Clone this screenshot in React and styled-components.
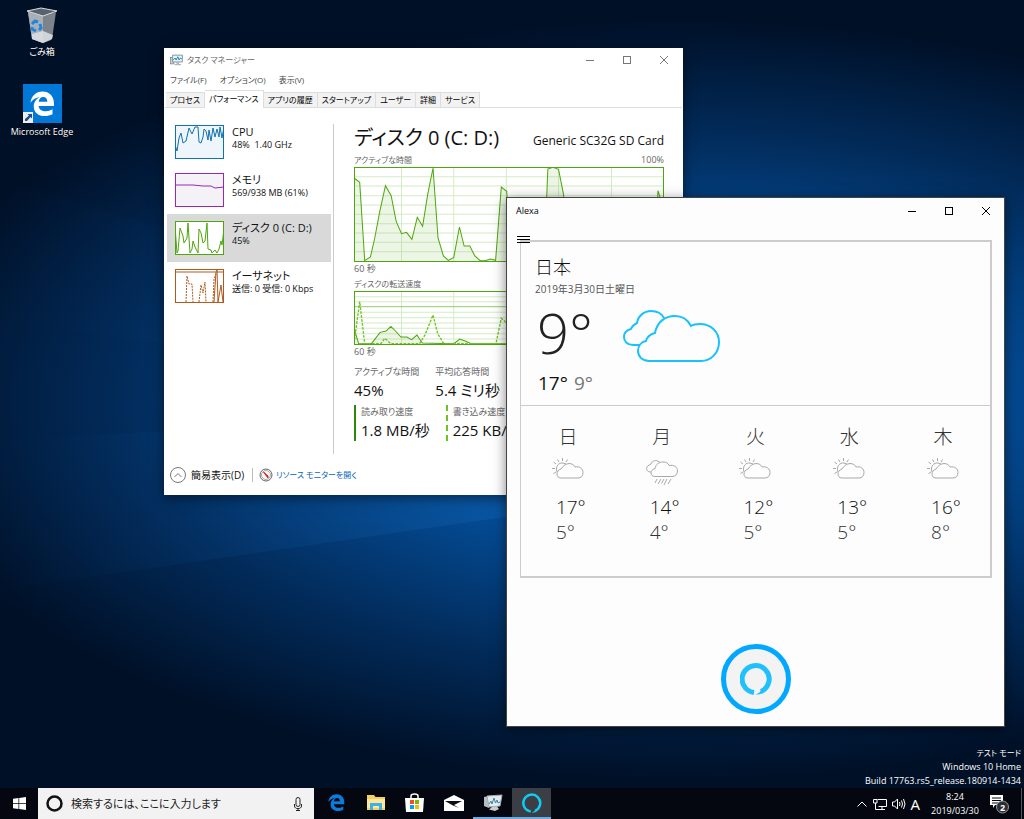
import { useState } from "react";
import styled, { createGlobalStyle, css } from "styled-components";

const GlobalStyle = createGlobalStyle`
  * {
    box-sizing: border-box;
  }
  body {
    margin: 0;
    font-family: "Open Sans", "Noto Sans CJK JP", sans-serif;
    font-size: 9px;
    line-height: 12px;
    font-feature-settings: "palt";
    color: #111;
  }
  button, input {
    font: inherit;
    font-feature-settings: inherit;
    color: inherit;
    border: 0;
    padding: 0;
    background: none;
  }
  a {
    color: inherit;
    text-decoration: none;
  }
  h1, h2, p, ul, dl, dd {
    margin: 0;
    padding: 0;
    font-weight: 400;
  }
  svg {
    display: block;
    flex: none;
  }
`;

/* desktop */

const Desktop = styled.div`
  position: relative;
  min-height: 100vh;
  display: flex;
  flex-direction: column;
  overflow: hidden;
  background: #001027;
`;

const WallpaperSvg = styled.svg`
  position: absolute;
  inset: 0;
  width: 100%;
  height: 100%;
`;

const DesktopArea = styled.main`
  position: relative;
  flex: 1;
  display: flex;
  flex-direction: column;
  justify-content: space-between;
`;

const Shortcuts = styled.nav`
  width: 84px;
  padding-top: 7px;
  display: flex;
  flex-direction: column;
  gap: 26px;
`;

const Shortcut = styled.a`
  display: flex;
  flex-direction: column;
  align-items: center;
  gap: 3px;
  color: #fff;
  text-shadow: 0 1px 2px #000;
  white-space: nowrap;
`;

const Watermark = styled.div`
  align-self: flex-end;
  padding: 0 3px 0 0;
  color: #fff;
  text-align: right;
  line-height: 14px;
`;

const Small = styled.span`
  font-size: 8px;
`;

/* windows */

const Window = styled.section`
  position: absolute;
  left: ${(p) => p.$x}px;
  top: ${(p) => p.$y}px;
  width: ${(p) => p.$w}px;
  min-height: ${(p) => p.$h}px;
  display: flex;
  flex-direction: column;
  background: ${(p) => p.$bg || "#fff"};
  border: 1px solid ${(p) => p.$edge || "#fff"};
  box-shadow: 0 3px 12px rgba(0, 0, 0, 0.5);
`;

const TitleBar = styled.header`
  height: ${(p) => p.$h}px;
  flex: none;
  display: flex;
  align-items: center;
  gap: 4px;
  padding-left: ${(p) => p.$pad}px;
  color: ${(p) => p.$color};
`;

const TitleText = styled.h1`
  flex: 1;
  font-size: ${(p) => p.$size || 9}px;
  line-height: 12px;
`;

const Controls = styled.div`
  display: flex;
  height: 100%;
`;

const CaptionButton = styled.button`
  width: 37px;
  height: 100%;
  display: grid;
  place-items: center;
`;

const MenuBar = styled.nav`
  display: flex;
  gap: 13px;
  height: 20px;
  padding: 3px 5px 5px;
  font-size: 8px;
  color: #444;
`;

const TabBar = styled.div`
  display: flex;
  align-items: flex-end;
  height: 17px;
  padding: 0 1px;
  font-size: 8px;
  border-bottom: 1px solid #ddd;
`;

const Tab = styled.button`
  height: 15px;
  padding: 0 4px;
  white-space: nowrap;
  color: #000;
  background: #f2f2f2;
  border: 1px solid #ddd;
  border-left-width: 0;
  border-bottom: 0;
  ${(p) =>
    p.$active &&
    css`
      height: 18px;
      margin-bottom: -1px;
      padding: 0 4px 2px;
      background: #fff;
    `}
`;

const TaskBody = styled.div`
  flex: 1;
  display: flex;
`;

const SideList = styled.ul`
  width: 167px;
  padding: 10px 0 0 2px;
  list-style: none;
`;

const SideItem = styled.button`
  width: 164px;
  height: 48px;
  padding: 0 8px;
  display: flex;
  align-items: center;
  gap: 8px;
  text-align: left;
  white-space: nowrap;
  background: ${(p) => (p.$active ? "#d9d9d9" : "transparent")};
`;

const SideName = styled.div`
  font-size: 11px;
  line-height: 15px;
`;

const SideInfo = styled.div`
  line-height: 12px;
  padding-bottom: 10px;
  white-space: pre;
`;

const Details = styled.div`
  flex: 1;
  margin: 16px 0 0 1px;
  padding: 0 18px 0 20px;
  border-left: 1px solid #ccc;
  height: 330px;
`;

const DetailsHead = styled.div`
  display: flex;
  justify-content: space-between;
  align-items: baseline;
  height: 29px;
  white-space: nowrap;
`;

const DetailsTitle = styled.h2`
  font-size: 20px;
  line-height: 27px;
`;

const DeviceName = styled.span`
  font-size: 12px;
`;

const ChartCaption = styled.div`
  display: flex;
  justify-content: space-between;
  color: #666;
  line-height: 14px;
  margin-bottom: ${(p) => p.$gap || 0}px;
`;

const Stats = styled.dl`
  display: flex;
  gap: 16px;
  margin-bottom: 4px;
`;

const Stat = styled.div`
  white-space: nowrap;
  ${(p) =>
    p.$bar &&
    css`
      padding-left: 5px;
      border-left: 2px ${p.$bar};
    `}
  dt {
    color: #666;
    line-height: 14px;
  }
  dd {
    font-size: 15px;
    line-height: 22px;
  }
`;

const TaskFooter = styled.footer`
  height: 39px;
  padding-left: 5px;
  display: flex;
  align-items: center;
  gap: 8px;
`;

const FooterButton = styled.button`
  display: flex;
  align-items: center;
  gap: 5px;
  font-size: 10px;
`;

const FooterLink = styled.a`
  display: flex;
  align-items: center;
  gap: 3px;
  padding-left: 6px;
  border-left: 1px solid #bbb;
  font-size: 8px;
  color: #0563c1;
`;

/* alexa */

const MenuButton = styled.button`
  position: absolute;
  left: 9px;
  top: 35px;
  width: 15px;
  height: 13px;
  display: grid;
  place-items: center;
`;

const WeatherCard = styled.article`
  margin: 16px 12px 0 13px;
  height: 338px;
  border: 2px solid #ccc;
  border-left-width: 1px;
`;

const Today = styled.div`
  height: 164px;
  padding: 13px 14px 0;
  border-bottom: 1px solid #ccc;
`;

const Place = styled.h2`
  font-size: 18px;
  line-height: 24px;
  font-weight: 300;
`;

const Now = styled.div`
  display: flex;
  align-items: flex-start;
  gap: 30px;
  height: 69px;
  padding-left: 2px;
  svg {
    margin-top: 11px;
  }
`;

const Degree = styled.span`
  font-size: ${(p) => p.$size || 19}px;
  line-height: ${(p) => p.$line || 25}px;
  font-weight: ${(p) => p.$weight || 300};
  color: ${(p) => p.$color || "#111"};
`;

const HighLow = styled.div`
  display: flex;
  gap: 6px;
  padding: 3px 3px 0;
`;

const Week = styled.ul`
  display: grid;
  grid-template-columns: repeat(5, 1fr);
  list-style: none;
`;

const Day = styled.li`
  display: grid;
  justify-items: center;
  gap: 8px;
  padding-top: 18px;
`;

const DayName = styled.div`
  font-size: 19px;
  line-height: 26px;
  font-weight: 300;
  color: #333;
`;

const DayTemps = styled.div`
  width: 24px;
  display: grid;
  padding-top: 1px;
`;

const TalkArea = styled.div`
  display: flex;
  justify-content: center;
  padding-top: 66px;
`;

const TalkButton = styled.button`
  width: 70px;
  height: 70px;
  display: grid;
  place-items: center;
  border: 5px solid #00a8ff;
  border-radius: 50%;
  background: #f3f3f3;
`;

/* taskbar */

const Taskbar = styled.footer`
  position: relative;
  height: 31px;
  display: flex;
  align-items: stretch;
  background: #04070f;
  color: #fff;
`;

const StartButton = styled.button`
  width: 38px;
  display: grid;
  place-items: center;
`;

const SearchBox = styled.label`
  width: 276px;
  margin-right: 3px;
  padding: 0 10px 0 8px;
  display: flex;
  align-items: center;
  gap: 8px;
  background: #f2f2f2;
  color: #111;
`;

const SearchInput = styled.input`
  flex: 1;
  min-width: 0;
  font-size: 11px;
  outline: none;
  &::placeholder {
    color: #222;
    opacity: 1;
  }
`;

const AppButton = styled.button`
  width: 39px;
  display: grid;
  place-items: center;
  background: ${(p) => (p.$active ? "#3b3e45" : "transparent")};
  border-bottom: 2px solid ${(p) => (p.$running ? "#6cabe0" : "transparent")};
`;

const Tray = styled.div`
  margin-left: auto;
  display: flex;
  align-items: center;
  gap: 5px;
`;

const TrayButton = styled.button`
  display: grid;
  place-items: center;
  font-size: 15px;
`;

const Clock = styled.time`
  width: 54px;
  margin-left: 3px;
  text-align: center;
  line-height: 14px;
`;

const ActionCenter = styled.button`
  width: 24px;
  margin-right: 5px;
  display: grid;
  place-items: center;
`;

const ShowDesktop = styled.button`
  width: 3px;
  align-self: stretch;
  border-left: 1px solid #555;
`;

/* drawings */

const Wallpaper = () => (
  <WallpaperSvg viewBox="0 0 1024 819" preserveAspectRatio="none" aria-hidden="true">
    <defs>
      <radialGradient id="glow" gradientUnits="userSpaceOnUse" cx="0" cy="0" r="1" gradientTransform="translate(680 400) scale(800 380)">
        <stop offset="0" stopColor="#0a66c0" />
        <stop offset="0.4" stopColor="#044a92" />
        <stop offset="0.7" stopColor="#022b5a" />
        <stop offset="1" stopColor="#001027" />
      </radialGradient>
      <linearGradient id="beam" x1="1" x2="0" y1="0" y2="0">
        <stop offset="0" stopColor="#1c7fd6" stopOpacity="0.4" />
        <stop offset="1" stopColor="#0a4f9a" stopOpacity="0" />
      </linearGradient>
    </defs>
    <rect width="1024" height="819" fill="url(#glow)" />
    <path d="M760 480 L0 590 L0 440 L760 400Z" fill="url(#beam)" />
    <path d="M760 400 L0 180 L0 320 L760 430Z" fill="url(#beam)" opacity="0.5" />
  </WallpaperSvg>
);

const RecycleBin = () => (
  <svg width="32" height="36" viewBox="0 0 32 36">
    <path d="M2 5 L29 6 L25 33 L17 36 L6 32Z" fill="#8d949b" />
    <path d="M2 5 L17 9 L17 36 L6 32Z" fill="#a9afb5" />
    <path d="M17 9 L30 5 L26 32 L17 36Z" fill="#7c838b" />
    <path d="M6 27 L17 24 L27 28 L26 32 L17 36 L6 32Z" fill="#dfe2e4" opacity=".85" />
    <path d="M1 4 L15 1 L31 4 L17 9Z" fill="#59626c" stroke="#d9dde0" />
    <g fill="none" stroke="#1f86e0" strokeWidth="3">
      <path d="M6 17 L9 14 L12 15" />
      <path d="M14 17 L15 21 L13 23" />
      <path d="M10 24 L6 22 L6 20" />
    </g>
  </svg>
);

const EdgeGlyph = ({ size, color }) => (
  <svg width={size} height={size} viewBox="0 0 24 24">
    <path
      fill={color}
      d="M.5 11.2C1.100 5 5.800.500 12 .500c6.600 0 11 4.600 11 11.300v2.600H8.300c.200 3.500 3.300 5.100 6.700 5.100 2.500 0 4.600-.700 6.600-1.900v4.700c-2.200 1.200-4.700 1.700-7.400 1.700C8.100 24 3.600 20.600 3.600 14.800c0-4 2.200-7.200 5.800-8.900C5.800 6 2.600 8 .5 11.200ZM8.400 10.200h8.200c0-2.600-1.300-4.400-3.900-4.400-2.500 0-4 1.900-4.300 4.400Z"
    />
  </svg>
);

const EdgeTile = () => (
  <svg width="39" height="39" viewBox="0 0 39 39">
    <rect width="39" height="39" fill="#0078d7" />
    <svg x="7" y="7" width="25" height="25">
      <EdgeGlyph size={25} color="#fff" />
    </svg>
    <rect x="0" y="28" width="10" height="11" fill="#eee" />
    <path d="M2 37 V35 L6 31.500 L4.500 30 H9 V34.500 L7.500 33 L4 37Z" fill="#1b4f8f" />
  </svg>
);

const Minimize = ({ color }) => (
  <svg width="10" height="10" stroke={color}>
    <path d="M1 5.500 H9" />
  </svg>
);

const Maximize = ({ color }) => (
  <svg width="10" height="10" fill="none" stroke={color}>
    <rect x="1.500" y="1.500" width="7" height="7" />
  </svg>
);

const Close = ({ color }) => (
  <svg width="10" height="10" stroke={color}>
    <path d="M1 1 L9 9 M9 1 L1 9" />
  </svg>
);

const WindowControls = ({ color }) => (
  <Controls>
    <CaptionButton aria-label="最小化">
      <Minimize color={color} />
    </CaptionButton>
    <CaptionButton aria-label="最大化">
      <Maximize color={color} />
    </CaptionButton>
    <CaptionButton aria-label="閉じる">
      <Close color={color} />
    </CaptionButton>
  </Controls>
);

const MonitorIcon = () => (
  <svg width="13" height="12" viewBox="0 0 20 18">
    <rect x="1" y="5" width="5" height="10" fill="#c9ced2" stroke="#777" />
    <path d="M4 1.500 H19 V12 H4Z" fill="#e8f4fa" stroke="#88939b" strokeWidth="1.500" />
    <path d="M5 9 L8 6 L9.500 9 L12 4 L14 9 L16 6 L18 7" fill="none" stroke="#1b86b8" strokeWidth="1.500" />
    <path d="M10 12 H14 V15 H17 V17 H7 V15 H10Z" fill="#b2b8bd" />
  </svg>
);

const MonitorIconLarge = () => (
  <svg width="20" height="18" viewBox="0 0 20 18">
    <path d="M1 3 L6 2 V14 L1 12Z" fill="#b9bec3" />
    <path d="M4 2 L19 1 L17 12 L6 13Z" fill="#e6eaed" stroke="#a4abb0" />
    <path d="M6 10 L8 7 L9 10 L11 4 L12.500 9 L14 6 L15 9 L17 8" fill="none" stroke="#3a87ad" />
    <path d="M9 13 L14 12.500 L16 15 L12 17 L6 15.500Z" fill="#c9cdd1" />
  </svg>
);

const thumbs = {
  cpu: {
    color: "#1172ad",
    fill: "#eef5fb",
    lines: ["0,20 2,26 4,13 6,8 8,18 11,16 14,3 17,9 20,2 23,2 24,17 26,18 28,12 29,4 31,6 33,15 34,5 36,16 38,3 40,12 42,4 44,12 45,2 47,13 49,2 49,18"],
  },
  memory: { color: "#9528b4", fill: "#f4f2f7", lines: ["0,12 18,12 28,13 36,13 40,15 49,14"] },
  disk: {
    color: "#4da60c",
    fill: "#fff",
    lines: [
      "0,5 2,32 3,30 5,7 8,15 9,22 12,17 13,2 15,32 17,28 18,20 20,26 23,32 24,8 26,12 28,22 30,20 32,2 33,28 36,29 37,32 40,29 42,32 44,28 46,20 47,24 49,8",
    ],
  },
  ethernet: {
    color: "#b05a1e",
    fill: "#fff",
    lines: ["0,3 49,3", "39,33 41,3 42,1 43,33 46,16 48,33"],
    dashed: ["11,33 12,7 14,15 17,15 18,33", "24,33 26,16 28,24 30,13 31,33", "38,33 39,10 41,5"],
  },
};

const Thumb = ({ kind }) => {
  const t = thumbs[kind];
  return (
    <svg width="49" height="34" viewBox="0 0 49 34" fill="none" stroke={t.color}>
      <rect x="0.500" y="0.500" width="48" height="33" fill={t.fill} />
      {t.lines.map((l) => (
        <polyline key={l} points={l} />
      ))}
      {(t.dashed || []).map((l) => (
        <polyline key={l} points={l} strokeDasharray="2 1" />
      ))}
    </svg>
  );
};

const activity =
  "0,33 17,46 32,281 49,270 62,213 77,133 94,56 111,86 126,163 142,200 157,196 173,217 189,151 205,178 220,83 236,3 251,213 267,267 282,280 298,271 315,180 329,237 346,237 361,267 377,281 392,281 407,276 423,280 440,60 456,73 472,281 568,281 579,6 594,1 611,7 626,83 642,281 898,281 908,71 915,93 926,160";
const readRate =
  "0,108 6,132 14,158 52,158 78,124 96,120 110,106 124,120 140,138 158,138 172,146 188,132 204,156 298,158 316,144 334,151 350,158 926,158";
const writeRate = "0,158 17,32 32,158 80,158 92,142 110,158 196,158 212,132 236,72 250,128 268,158 424,158 440,82 456,96 472,158";

const verticals = [142, 298, 455, 611, 769];

const Chart = ({ height, span, rows, children }) => (
  <svg width="100%" height={height} viewBox={`0 0 926 ${span}`} preserveAspectRatio="none" fill="none">
    {rows.map((y) => (
      <path key={y} d={`M0 ${y} H926`} stroke="#d4ebc4" strokeWidth="3" />
    ))}
    {verticals.map((x) => (
      <path key={x} d={`M${x} 0 V${span}`} stroke="#d4ebc4" strokeWidth="3" />
    ))}
    {children}
    <rect x="1.500" y="1.500" width="923" height={span - 3} stroke="#4da60c" strokeWidth="3" />
  </svg>
);

const ActivityChart = () => (
  <Chart height={95} span={285} rows={[29, 57, 86, 114, 142, 170, 198, 226, 254]}>
    <polygon points={`0,285 ${activity} 926,285`} fill="#4da60c" fillOpacity="0.1" />
    <polyline points={activity} stroke="#4da60c" strokeWidth="3" />
  </Chart>
);

const TransferChart = () => (
  <Chart height={54} span={162} rows={[17, 32, 64, 80, 96, 112, 128, 144]}>
    <path d="M0 47 H926" stroke="#a5d684" strokeWidth="4" />
    <polygon points={`0,162 ${readRate} 926,162`} fill="#4da60c" fillOpacity="0.1" />
    <polyline points={readRate} stroke="#4da60c" strokeWidth="3" />
    <polyline points={writeRate} stroke="#6cc41c" strokeWidth="4" strokeDasharray="8 4" />
  </Chart>
);

const ChevronCircle = () => (
  <svg width="16" height="16" fill="none" stroke="#777">
    <circle cx="8" cy="8" r="7.500" />
    <path d="M4.500 10 L8 6.500 L11.500 10" />
  </svg>
);

const Gauge = () => (
  <svg width="14" height="14" fill="none">
    <circle cx="7" cy="7" r="6" fill="#fafafa" stroke="#666" />
    <circle cx="7" cy="7" r="4.500" stroke="#aaa" />
    <path d="M4.500 4 L9 10 L9 8Z" fill="#d22" stroke="#d22" />
  </svg>
);

const Clouds = () => (
  <svg width="97" height="52" viewBox="0 0 97 52" fill="none" stroke="#1ac2fb" strokeWidth="2">
    <path d="M17 35 H10 C4 35 1 31 1 27 C1 23 4 20 8 19 C9 16 12 14 14 13 C15 6 21 1 28 1 C34 1 39 4 41 8" />
    <path d="M26 51 C19 51 15 46 15 41 C15 36 18 32 23 31 C24 27 28 24 32 23 C34 12 42 6 52 6 C59 6 65 10 68 16 C71 14 74 14 77 14 C88 14 96 22 96 32 C96 43 88 51 78 51 Z" />
  </svg>
);

const SunCloud = () => (
  <svg width="32" height="28" viewBox="0 0 32 28" fill="none" stroke="#a8a8a8">
    <path d="M9 20 C6 20 5 18 5 16 C5 14 6 12 9 11 C11 8 13 6 17 5.500 C20 5.500 22 7 23 9 C28 8 31 11 31 14.500 C31 18 29 20 26 20Z" />
    <path d="M5 14 C3 8 7 4.500 11 5 L14 6 M0 10.500 H3 M1.500 4 L4 6 M5.500 1.500 L7 4 M10.500 0 V3 M15.500 1.500 L14 4 M1.500 15.500 L4 14" />
  </svg>
);

const RainCloud = () => (
  <svg width="32" height="28" viewBox="0 0 32 28" fill="none" stroke="#a8a8a8">
    <path d="M9 18.500 C6 18.500 5 16.500 5 15 C5 13 6 11.500 9 10.500 C10 6 13 4 17 4 C20 4 22 5 23 7.500 C28 6.500 31.500 9 31.500 13 C31.500 16.500 29 18.500 26 18.500Z" />
    <path d="M5 14 C1 14 0 11 1 9 C2 7 4 7 5 6 C6 3 9 2 12 3 L14 4.500" />
    <path d="M11 21 L9 25 M15 21 L12 26 M18 21 L15.500 25.500 M21 21 L18 27 M25 21 L22 26" />
  </svg>
);

const AlexaRing = ({ size, color, width }) => (
  <svg width={size} height={size} viewBox="0 0 32 32" fill="none">
    <path d="M14 29.500 A13.500 13.500 0 1 1 21 28.500" stroke={color} strokeWidth={width} />
    <path d="M15.500 31.500 Q20 30 22 26 L23 30 Q19 32 15.500 31.500Z" fill={color} />
  </svg>
);

const WindowsLogo = () => (
  <svg width="13" height="13" viewBox="0 0 13 13" fill="#fff">
    <path d="M0 1.800 L5.500 1 V6 H0Z M6.200 .9 L13 0 V6 H6.200Z M0 6.800 H5.500 V12 L0 11.200Z M6.200 6.800 H13 V13 L6.200 12.100Z" />
  </svg>
);

const Cortana = () => (
  <svg width="17" height="17" fill="none">
    <circle cx="8.500" cy="8.500" r="7" stroke="#111" strokeWidth="2.500" />
  </svg>
);

const Mic = () => (
  <svg width="12" height="14" viewBox="0 0 12 14" fill="none" stroke="#222">
    <rect x="4" y="0.500" width="4" height="9" rx="2" />
    <path d="M2.500 7 V9 C2.500 12.500 9.500 12.500 9.500 9 V7 M6 11.500 V13.500 M4 13.500 H8" />
  </svg>
);

const Folder = () => (
  <svg width="18" height="15" viewBox="0 0 18 15">
    <path d="M0 0 H7 L8.500 2 H18 V15 H0Z" fill="#f5cf63" />
    <path d="M0 4 H18 V13 H0Z" fill="#fde79b" />
    <path d="M3 8 H15 V15 H12 V11 H6 V15 H3Z" fill="#3fb0e8" />
  </svg>
);

const Store = () => (
  <svg width="19" height="19" viewBox="0 0 19 19">
    <path d="M6 6 V3 Q6 1 9.500 1 Q13 1 13 3 V6" fill="none" stroke="#fff" strokeWidth="1.500" />
    <path d="M0 5 H19 L18 19 H1Z" fill="#fff" />
    <rect x="5" y="7" width="4" height="4" fill="#f25022" />
    <rect x="10" y="7" width="4" height="4" fill="#7fba00" />
    <rect x="5" y="12" width="4" height="4" fill="#00a4ef" />
    <rect x="10" y="12" width="4" height="4" fill="#ffb900" />
  </svg>
);

const Mail = () => (
  <svg width="20" height="16" viewBox="0 0 20 16">
    <path d="M0 5 L10 0 L20 5 V16 H0Z" fill="#fff" />
    <path d="M1 6 H18 L10 10 L15 13 L9 10.500Z" fill="#0a0d14" />
  </svg>
);

const Network = () => (
  <svg width="14" height="12" viewBox="0 0 14 12" fill="none" stroke="#fff">
    <path d="M4.500 1.500 H13.500 V8.500 H5.500 M9 8.500 V11 M6 11.500 H12 M0.500 1.500 H4 V5 H0.500Z M2.500 5 V11.500 H6" />
  </svg>
);

const Speaker = () => (
  <svg width="14" height="12" viewBox="0 0 14 12" fill="none" stroke="#fff">
    <path d="M0.500 4 H2.500 L5.500 1 V11 L2.500 8 H0.500Z M7.500 4 Q8.500 6 7.500 8 M9.500 2.500 Q11.500 6 9.500 9.500 M11.500 1 Q14.500 6 11.500 11" />
  </svg>
);

const Notifications = () => (
  <svg width="20" height="20" viewBox="0 0 20 20">
    <path d="M1 1 H14 V11 H6 L4 14 V11 H1Z" fill="#fff" />
    <path d="M3 4 H12 M3 6.500 H12 M3 9 H9" stroke="#04070f" />
    <circle cx="13.500" cy="13" r="6" fill="#2b2d33" stroke="#999" />
    <text x="13.500" y="16.500" fill="#fff" fontSize="9" fontWeight="700" textAnchor="middle">
      2
    </text>
  </svg>
);

const tabs = ["プロセス", "パフォーマンス", "アプリの履歴", "スタートアップ", "ユーザー", "詳細", "サービス"];

const resources = [
  { kind: "cpu", name: "CPU", info: "48%  1.40 GHz" },
  { kind: "memory", name: "メモリ", info: "569/938 MB (61%)" },
  { kind: "disk", name: "ディスク 0 (C: D:)", info: "45%" },
  { kind: "ethernet", name: "イーサネット", info: "送信: 0 受信: 0 Kbps" },
];

const week = [
  { day: "日", icon: SunCloud, high: 17, low: 5 },
  { day: "月", icon: RainCloud, high: 14, low: 4 },
  { day: "火", icon: SunCloud, high: 12, low: 5 },
  { day: "水", icon: SunCloud, high: 13, low: 5 },
  { day: "木", icon: SunCloud, high: 16, low: 8 },
];

const TaskManager = () => {
  const [tab, setTab] = useState("パフォーマンス");
  const [resource, setResource] = useState("disk");

  return (
    <Window $x={164} $y={48} $w={519} $h={447}>
      <TitleBar $h={22} $pad={5} $color="#666">
        <MonitorIcon />
        <TitleText $size={8}>タスク マネージャー</TitleText>
        <WindowControls color="#777" />
      </TitleBar>
      <MenuBar>
        <a href="#file">ファイル(F)</a>
        <a href="#options">オプション(O)</a>
        <a href="#view">表示(V)</a>
      </MenuBar>
      <TabBar role="tablist">
        {tabs.map((t) => (
          <Tab key={t} role="tab" aria-selected={t === tab} $active={t === tab} onClick={() => setTab(t)}>
            {t}
          </Tab>
        ))}
      </TabBar>
      <TaskBody>
        <SideList>
          {resources.map((r) => (
            <li key={r.kind}>
              <SideItem $active={r.kind === resource} onClick={() => setResource(r.kind)}>
                <Thumb kind={r.kind} />
                <div>
                  <SideName>{r.name}</SideName>
                  <SideInfo>{r.info}</SideInfo>
                </div>
              </SideItem>
            </li>
          ))}
        </SideList>
        <Details>
          <DetailsHead>
            <DetailsTitle>ディスク 0 (C: D:)</DetailsTitle>
            <DeviceName>Generic SC32G SD Card</DeviceName>
          </DetailsHead>
          <ChartCaption>
            <Small>アクティブな時間</Small>
            <span>100%</span>
          </ChartCaption>
          <ActivityChart />
          <ChartCaption $gap={1}>60 秒</ChartCaption>
          <ChartCaption>
            <Small>ディスクの転送速度</Small>
          </ChartCaption>
          <TransferChart />
          <ChartCaption $gap={6}>60 秒</ChartCaption>
          <Stats>
            <Stat>
              <dt>アクティブな時間</dt>
              <dd>45%</dd>
            </Stat>
            <Stat>
              <dt>平均応答時間</dt>
              <dd>5.4 ミリ秒</dd>
            </Stat>
          </Stats>
          <Stats>
            <Stat $bar="solid #2f8a0c">
              <dt>読み取り速度</dt>
              <dd>1.8 MB/秒</dd>
            </Stat>
            <Stat $bar="dashed #6cc41c">
              <dt>書き込み速度</dt>
              <dd>225 KB/秒</dd>
            </Stat>
          </Stats>
        </Details>
      </TaskBody>
      <TaskFooter>
        <FooterButton>
          <ChevronCircle />
          簡易表示(D)
        </FooterButton>
        <FooterLink href="#monitor">
          <Gauge />
          リソース モニターを開く
        </FooterLink>
      </TaskFooter>
    </Window>
  );
};

const Alexa = () => (
  <Window $x={506} $y={197} $w={499} $h={530} $bg="#fdfdfd" $edge="#444">
    <TitleBar $h={26} $pad={9} $color="#000">
      <TitleText>Alexa</TitleText>
      <WindowControls color="#000" />
    </TitleBar>
    <MenuButton aria-label="メニュー">
      <svg width="13" height="9" stroke="#000">
        <path d="M0 1.500 H13 M0 4.500 H13 M0 7.500 H13" />
      </svg>
    </MenuButton>
    <WeatherCard>
      <Today>
        <Place>日本</Place>
        <Degree as="p" $size={10} $line={20} $weight={400} $color="#555">
          2019年3月30日土曜日
        </Degree>
        <Now>
          <Degree $size={56} $line={66} $color="#222">
            9°
          </Degree>
          <Clouds />
        </Now>
        <HighLow>
          <Degree $weight={400}>17°</Degree>
          <Degree $weight={400} $color="#777">
            9°
          </Degree>
        </HighLow>
      </Today>
      <Week>
        {week.map(({ day, icon: Icon, high, low }) => (
          <Day key={day}>
            <DayName>{day}</DayName>
            <Icon />
            <DayTemps>
              <Degree>{high}°</Degree>
              <Degree $color="#333">{low}°</Degree>
            </DayTemps>
          </Day>
        ))}
      </Week>
    </WeatherCard>
    <TalkArea>
      <TalkButton aria-label="Alexa">
        <AlexaRing size={32} width={5} color="#1fc0fb" />
      </TalkButton>
    </TalkArea>
  </Window>
);

function App() {
  return (
    <Desktop lang="ja">
      <GlobalStyle />
      <Wallpaper />
      <DesktopArea>
        <Shortcuts>
          <Shortcut href="#trash">
            <RecycleBin />
            ごみ箱
          </Shortcut>
          <Shortcut href="#edge">
            <EdgeTile />
            Microsoft Edge
          </Shortcut>
        </Shortcuts>
        <Watermark>
          <p>
            <Small>テスト モード</Small>
          </p>
          <p>Windows 10 Home</p>
          <p>Build 17763.rs5_release.180914-1434</p>
        </Watermark>
        <TaskManager />
        <Alexa />
      </DesktopArea>
      <Taskbar>
        <StartButton aria-label="スタート">
          <WindowsLogo />
        </StartButton>
        <SearchBox>
          <Cortana />
          <SearchInput aria-label="検索" placeholder="検索するには、ここに入力します" />
          <Mic />
        </SearchBox>
        <AppButton aria-label="Microsoft Edge">
          <EdgeGlyph size={17} color="#0c7cdc" />
        </AppButton>
        <AppButton aria-label="エクスプローラー">
          <Folder />
        </AppButton>
        <AppButton aria-label="Microsoft Store">
          <Store />
        </AppButton>
        <AppButton aria-label="メール">
          <Mail />
        </AppButton>
        <AppButton aria-label="タスク マネージャー" $running>
          <MonitorIconLarge />
        </AppButton>
        <AppButton aria-label="Alexa" $running $active>
          <AlexaRing size={20} width={4} color="#12cbf5" />
        </AppButton>
        <Tray>
          <TrayButton aria-label="隠れているインジケーター">
            <svg width="12" height="8" fill="none" stroke="#fff">
              <path d="M1.500 6.500 L6 2 L10.500 6.500" />
            </svg>
          </TrayButton>
          <TrayButton aria-label="ネットワーク">
            <Network />
          </TrayButton>
          <TrayButton aria-label="音量">
            <Speaker />
          </TrayButton>
          <TrayButton>A</TrayButton>
          <Clock>
            8:24
            <br />
            2019/03/30
          </Clock>
          <ActionCenter aria-label="通知">
            <Notifications />
          </ActionCenter>
          <ShowDesktop aria-label="デスクトップの表示" />
        </Tray>
      </Taskbar>
    </Desktop>
  );
}

export default App;
